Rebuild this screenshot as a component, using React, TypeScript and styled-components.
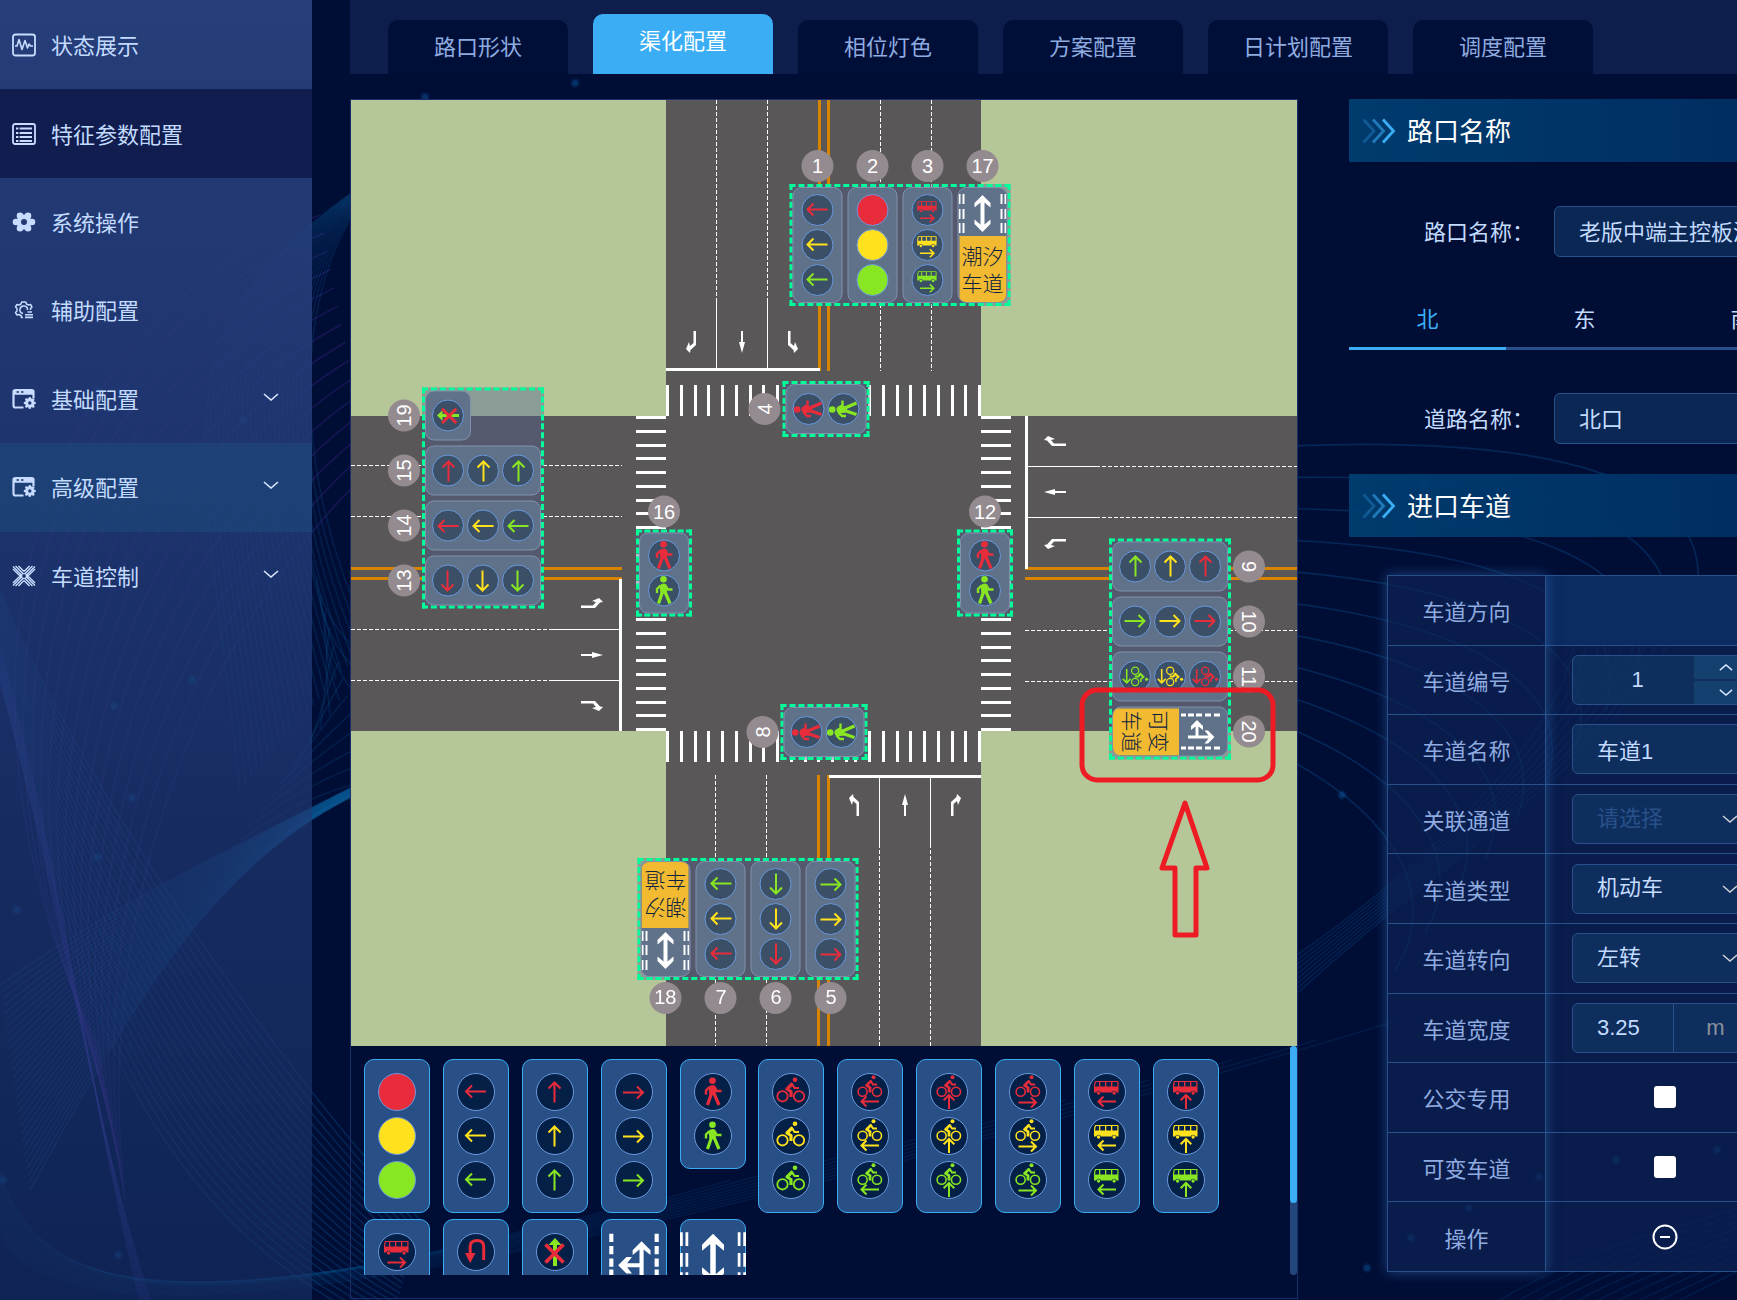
import React, { useState } from "react";
import styled, { createGlobalStyle, css } from "styled-components";

const fontStack = '"Liberation Sans", "Noto Sans CJK SC", sans-serif';

const colors = {
  page: "#000e36",
  bar: "#0e1e4c",
  line: "#28518a",
  accent: "#3aadf5",
  label: "#8fabe0",
  text: "#c3dbff",
  red: "#e92c3b",
  yellow: "#ffe21d",
  green: "#88e622",
};

const GlobalStyle = createGlobalStyle`
  *, *::before, *::after { box-sizing: border-box; }
  html, body { margin: 0; background: ${colors.page}; overflow-x: hidden; }
  body, button, input, select { font-family: ${fontStack}; font-size: 22px; }
  button { border: 0; padding: 0; margin: 0; background: none; color: inherit; cursor: pointer; }
  a { color: inherit; text-decoration: none; }
  ul { list-style: none; margin: 0; padding: 0; }
`;

/* ---------- backdrop ---------- */

type Curve = [number, number, number, number, number, number, number, number];

const ribbons: { from: Curve; to: Curve; count: number; color: string; opacity: number }[] = [
  { from: [0, 985, 120, 900, 230, 850, 370, 778], to: [30, 1190, 130, 1010, 210, 860, 370, 788], count: 30, color: "#0f6aa8", opacity: 0.26 },
  { from: [0, 590, 60, 740, 230, 1010, 420, 1220], to: [0, 680, 60, 900, 100, 1200, 390, 1330], count: 22, color: "#1566a8", opacity: 0.26 },
  { from: [0, 650, 60, 860, 90, 1100, 140, 1300], to: [0, 680, 60, 900, 100, 1150, 150, 1300], count: 5, color: "#4a3ab0", opacity: 0.3 },
  { from: [100, 1050, -70, 700, 20, 330, 320, 215], to: [125, 1200, 90, 900, 210, 620, 370, 470], count: 15, color: "#5a30a8", opacity: 0.26 },
  { from: [370, 190, 290, 290, 290, 470, 370, 640], to: [370, 180, 150, 330, 200, 420, 240, 790], count: 24, color: "#0f6aa8", opacity: 0.18 },
  { from: [312, 560, 320, 610, 340, 640, 370, 660], to: [370, 780, 330, 790, 300, 800, 240, 840], count: 14, color: "#0f6aa8", opacity: 0.18 },
  { from: [0, 1170, 30, 1290, 180, 1320, 480, 1240], to: [0, 1230, 40, 1330, 300, 1350, 1400, 1020], count: 12, color: "#0f6aa8", opacity: 0.14 },
  { from: [1290, 446, 1560, 435, 1720, 480, 1696, 600], to: [1290, 760, 1400, 820, 1440, 900, 1395, 970], count: 11, color: "#0f5ea0", opacity: 0.32 },
  { from: [1690, 590, 1650, 740, 1450, 850, 1290, 1000], to: [1575, 640, 1560, 740, 1420, 870, 1290, 960], count: 9, color: "#0f5ea0", opacity: 0.24 },
  { from: [1500, 1300, 1600, 1240, 1680, 1230, 1760, 1200], to: [1640, 1320, 1680, 1300, 1720, 1280, 1760, 1260], count: 10, color: "#0f5ea0", opacity: 0.16 },
];

const sparks: [number, number][] = [
  [575, 83], [425, 97], [97, 390], [243, 420], [192, 680], [114, 706], [132, 798], [97, 857], [17, 910],
  [3, 1180], [118, 1255], [1342, 795], [1425, 486], [1616, 1160], [1717, 1150], [1539, 1177], [1469, 1208], [1411, 1238], [1367, 1268],
];

const BackdropSvg = styled.svg`
  position: absolute;
  inset: 0;
  width: 100%;
  height: 100%;
  pointer-events: none;
`;

function Backdrop() {
  return (
    <BackdropSvg viewBox="0 0 1737 1300" preserveAspectRatio="xMinYMin slice" aria-hidden="true">
      {ribbons.map((r, i) => (
        <g key={i} fill="none" stroke={r.color} strokeOpacity={r.opacity} strokeWidth="1.6">
          {Array.from({ length: r.count }, (_, k) => {
            const t = k / (r.count - 1);
            const p = r.from.map((v, j) => Math.round((v + (r.to[j] - v) * t) * 10) / 10);
            return <path key={k} d={`M${p[0]} ${p[1]}C${p[2]} ${p[3]} ${p[4]} ${p[5]} ${p[6]} ${p[7]}`} />;
          })}
        </g>
      ))}
      {sparks.map(([x, y], i) => (
        <g key={i} fill="#1277c4">
          <circle cx={x} cy={y} r="5" opacity=".12" />
          <circle cx={x} cy={y} r="3" opacity=".25" />
        </g>
      ))}
    </BackdropSvg>
  );
}

/* ---------- page frame ---------- */

const Page = styled.div`
  position: relative;
  display: flex;
  min-height: 100vh;
  overflow: hidden;
  background: ${colors.page};
  color: ${colors.text};
`;

const Sidebar = styled.aside`
  position: relative;
  flex: 0 0 312px;
  background: linear-gradient(180deg, rgba(42, 67, 128, 0.9) 0%, rgba(38, 63, 126, 0.8) 30%, rgba(34, 60, 120, 0.68) 60%, rgba(25, 50, 104, 0.6) 100%);
`;

const MenuList = styled.ul`
  display: grid;
  grid-auto-rows: 1fr;
  height: 620px;
  padding-top: 1px;
`;

const MenuLink = styled.a<{ $tone?: "current" | "hover" }>`
  display: flex;
  align-items: center;
  height: 100%;
  padding: 0 33px 0 12px;
  gap: 15px;
  background: ${(p) => (p.$tone === "current" ? "#101d4e" : p.$tone === "hover" ? "rgba(32, 80, 128, 0.45)" : "transparent")};
  svg { flex: none; }
`;

const MenuText = styled.span`
  flex: 1;
  padding-bottom: 2px;
`;

const MenuArrow = styled.span`
  display: flex;
  padding-bottom: 4px;
`;

const Main = styled.main`
  position: relative;
  flex: 1;
  min-width: 0;
  margin-left: 38px;
`;

const TabBar = styled.nav`
  display: flex;
  align-items: flex-end;
  gap: 25px;
  height: 74px;
  padding-left: 38px;
  background: ${colors.bar};
`;

const Tab = styled.a<{ $active?: boolean }>`
  display: flex;
  align-items: center;
  justify-content: center;
  flex: 0 0 180px;
  height: 54px;
  padding-bottom: 4px;
  border-radius: 10px 10px 0 0;
  background: #000f38;
  color: ${colors.label};
  ${(p) =>
    p.$active &&
    css`
      height: 60px;
      padding-bottom: 10px;
      background: ${colors.accent};
      color: #fff;
    `}
`;

const Workspace = styled.div`
  display: flex;
  gap: 51px;
  padding: 25px 0 1px;
`;

/* ---------- menu icons ---------- */

const iconInk = "#c8dcff";

const ringPoints = (n: number, r: number, cx: number, cy: number, squash = 1) =>
  Array.from({ length: n }, (_, i) => {
    const a = (Math.PI * 2 * i) / n;
    return [(cx + Math.cos(a) * r).toFixed(1), (cy + Math.sin(a) * r * squash).toFixed(1)];
  });

type MenuIconKind = "status" | "params" | "system" | "aux" | "window" | "lanes";

function MenuIcon({ kind }: { kind: MenuIconKind }) {
  return (
    <svg width="24" height="24" viewBox="0 0 24 24" fill="none" stroke={iconInk} strokeWidth="1.8" aria-hidden="true">
      {kind === "status" && (
        <>
          <rect x="1" y="1.5" width="22" height="21" rx="2.5" />
          <path d="M3 13H5L7 6.500L10 16.500L13 7.500L15.500 15L17 11L18.500 13H21" strokeWidth="1.6" strokeLinejoin="round" />
        </>
      )}
      {kind === "params" && (
        <>
          <rect x="1" y="2" width="22" height="20" rx="2" />
          <path d="M4 6.500H20M4 11H20M4 15H20M4 19H20" strokeWidth="2" />
          <path d="M7 5V21" stroke="#101d4e" strokeWidth="1.2" />
        </>
      )}
      {kind === "system" && (
        <>
          <mask id="gearHole">
            <rect width="24" height="24" fill="#fff" stroke="none" />
            <circle cx="12" cy="12" r="3" fill="#000" stroke="none" />
          </mask>
          <g mask="url(#gearHole)" fill={iconInk} stroke="none">
            <circle cx="12" cy="12" r="7.500" />
            {ringPoints(6, 8, 12, 12, 0.9).map(([x, y]) => (
              <circle key={x + y} cx={x} cy={y} r="3.300" />
            ))}
          </g>
        </>
      )}
      {kind === "aux" && (
        <>
          <path
            strokeWidth="1.5"
            strokeLinejoin="round"
            d="M11 19.500H9.500L9 17.500L7 16.500L5 17L3.500 14.500L5 13V10.500L3.500 9L5 6.500L7 7L9 6L9.700 4H13.800L14.500 6L16.500 7L18.500 6.500L20 9L18.500 10.500V12"
          />
          <path strokeWidth="1.5" d="M11 15.500A3.800 3.800 0 1 1 15.500 12" />
          <path strokeWidth="1.6" d="M15.500 14H20M13 16.700H21M13 19.400H21" />
        </>
      )}
      {kind === "window" && (
        <>
          <path d="M11.500 20.500H3.500Q1.500 20.500 1.500 18.500V4.500Q1.500 3 3.500 3H19.500Q21.500 3 21.500 4.500V11" strokeWidth="2.2" />
          <path d="M1.500 5.500H21.500" strokeWidth="4.500" />
          <path d="M4.500 5H7M9 5H11.500" stroke="#24396f" strokeWidth="1.400" />
          {ringPoints(8, 4.8, 17.8, 16).map(([x, y]) => (
            <circle key={x + y} cx={x} cy={y} r="1.300" fill={iconInk} stroke="none" />
          ))}
          <circle cx="17.800" cy="16" r="3.200" strokeWidth="3" />
        </>
      )}
      {kind === "lanes" && (
        <>
          <path
            strokeWidth="1.400"
            d="M1 5L7 11M1 2.500L9.500 11M3.500 2L11 9.500M6.500 2L12 7.500M23 5L17 11M23 2.500L14.500 11M20.500 2L13 9.500M17.500 2L12 7.500M1 19L7 13M1 21.500L9.500 13M3.500 22L11 14.500M6.500 22L12 16.500M23 19L17 13M23 21.500L14.500 13M20.500 22L13 14.500M17.500 22L12 16.500M7 11L9 12L7 13M17 11L15 12L17 13"
          />
          <circle cx="12" cy="12" r="2.500" strokeWidth="1.200" />
        </>
      )}
    </svg>
  );
}

const Chevron = ({ up = false, size = 16, color = "#dbe7ff" }: { up?: boolean; size?: number; color?: string }) => (
  <svg width={size} height={size / 2} viewBox="0 0 16 8" fill="none" stroke={color} strokeWidth="1.6" aria-hidden="true">
    <path d={up ? "M1 7L8 1L15 7" : "M1 1L8 7L15 1"} />
  </svg>
);

const menu: { text: string; icon: MenuIconKind; tone?: "current" | "hover"; group?: boolean }[] = [
  { text: "状态展示", icon: "status" },
  { text: "特征参数配置", icon: "params", tone: "current" },
  { text: "系统操作", icon: "system" },
  { text: "辅助配置", icon: "aux" },
  { text: "基础配置", icon: "window", group: true },
  { text: "高级配置", icon: "window", group: true, tone: "hover" },
  { text: "车道控制", icon: "lanes", group: true },
];

/* ---------- signal lamps ---------- */

type LampKind =
  | "ball" | "left" | "up" | "right" | "walk" | "bike" | "bikeLeft" | "bikeUp" | "bikeRight"
  | "busLeft" | "busUp" | "busRight" | "uturn" | "closed";
type LampColor = "red" | "yellow" | "green";

const Lamp = styled.span<{ $size: number; $fill: string }>`
  display: flex;
  align-items: center;
  justify-content: center;
  flex: none;
  width: ${(p) => p.$size}px;
  height: ${(p) => p.$size}px;
  border: 1px solid #6b98dc;
  border-radius: 50%;
  background: ${(p) => p.$fill};
  svg { flex: none; }
`;

const Bike = () => (
  <>
    <circle cx="10.500" cy="23.300" r="5.200" fill="none" strokeWidth="1.800" />
    <circle cx="27" cy="23.300" r="5.200" fill="none" strokeWidth="1.800" />
    <circle cx="23" cy="6.700" r="2.300" stroke="none" />
    <path d="M20.500 10.500L15 16L19 18.500V24" fill="none" strokeWidth="3.200" strokeLinejoin="round" />
    <path d="M19.500 10.500L22.500 15H27" fill="none" strokeWidth="2.200" />
  </>
);

const Bus = () => (
  <path
    stroke="none"
    fillRule="evenodd"
    d="M7.500 8H29.500Q30.500 8 30.500 9V19.500H28.500A2.500 2.500 0 0 0 23.700 19.500H13A2.500 2.500 0 0 0 8.200 19.500H6V12L6.600 9Q6.800 8 7.500 8ZM7.800 9L7 13.500H11V9ZM12.300 9V13.500H17V9ZM18.300 9V13.500H23V9ZM24.300 9V13.500H29.300V9ZM10.600 18.300A1.700 1.700 0 1 0 10.610 18.300ZM26.100 18.300A1.700 1.700 0 1 0 26.110 18.300Z"
  />
);

const sideArrow = {
  Left: "M28 28.500H10.500M15.500 23.500L10.500 28.500L15.500 33.500",
  Right: "M9.500 29.500H27M22 24.500L27 29.500L22 34.500",
  Up: "M19 36V22M13.700 27.300L19 22L24.300 27.300",
};

function LampArt({ kind, color, onMap }: { kind: LampKind; color: string; onMap: boolean }) {
  const combined = kind.length > 5;
  const size = onMap && combined ? 30 : 38;
  const dir = kind.endsWith("Left") ? "Left" : kind.endsWith("Right") ? "Right" : "Up";
  return (
    <svg width={size} height={size} viewBox="0 0 38 38" fill={color} stroke={color} strokeWidth="2" aria-hidden="true">
      {kind === "left" && <path fill="none" d="M29 18.500H9M15 12.500L9 18.500L15 24.500" />}
      {kind === "right" && <path fill="none" d="M8 19.500H28M22 13.500L28 19.500L22 25.500" />}
      {kind === "up" && <path fill="none" d="M18.500 29.500V9.500M12.500 15.500L18.500 9.500L24.500 15.500" />}
      {kind === "walk" && (
        <>
          <circle cx="18.500" cy="7.700" r="3.300" stroke="none" />
          <path d="M14.500 14Q18 10.500 21.500 13L22 22H15.500Z" stroke="none" />
          <path d="M15.500 14L12 17.500V21.500M21 14.500L22.500 18H27.500" fill="none" strokeWidth="2.400" />
          <path d="M17.300 21L13.500 32M20.300 21L25 32" fill="none" strokeWidth="3.200" />
        </>
      )}
      {kind === "bike" && <Bike />}
      {kind.startsWith("bike") && kind !== "bike" && (
        <>
          <g transform="translate(2.500 -1.500) scale(.87)"><Bike /></g>
          <path fill="none" d={sideArrow[dir]} />
        </>
      )}
      {kind.startsWith("bus") && (
        <>
          <Bus />
          <path fill="none" d={sideArrow[dir]} />
        </>
      )}
      {kind === "uturn" && (
        <>
          <path d="M26.700 27V13.500Q26.700 7.500 20.200 7.500Q13.200 7.500 13.200 13.500V21" fill="none" strokeWidth="3" />
          <path d="M8 20H18.500L13.200 30Z" stroke="none" />
        </>
      )}
      {kind === "closed" && (
        <>
          <path d="M19 5L25.500 12H21V33H17V12H12.500Z" fill={colors.green} stroke="none" />
          <path d="M9.500 11.500L27.500 29.500M27.500 11.500L9.500 29.500" fill="none" strokeWidth="3.800" />
        </>
      )}
    </svg>
  );
}

function LampStack({ kind, size, onMap = false }: { kind: LampKind; size: number; onMap?: boolean }) {
  const list: LampColor[] = kind === "walk" ? ["red", "green"] : kind === "closed" ? ["red"] : ["red", "yellow", "green"];
  return (
    <>
      {list.map((c) => (
        <Lamp key={c} $size={size} $fill={kind === "ball" ? colors[c] : onMap ? "#3b4f66" : "#052046"}>
          {kind !== "ball" && <LampArt kind={kind} color={colors[c]} onMap={onMap} />}
        </Lamp>
      ))}
    </>
  );
}

/* lane signs: 48 units square */
function SignArt({ kind, size }: { kind: "tidal" | "variable"; size: number }) {
  return (
    <svg width={size} height={size} viewBox="0 0 48 48" fill="#fff" aria-hidden="true">
      {kind === "tidal" ? (
        <>
          <path d="M0 6h2v10h-2zM4 6h2v10h-2zM42 6h2v10h-2zM46 6h2v10h-2zM0 21h2v10h-2zM4 21h2v10h-2zM42 21h2v10h-2zM46 21h2v10h-2zM0 35h2v10h-2zM4 35h2v10h-2zM42 35h2v10h-2zM46 35h2v10h-2z" />
          <path d="M24 7L32 15V19.500L26 14.500V36.500L32 31.500V36L24 44L16 36V31.500L22 36.500V14.500L16 19.500V15Z" />
        </>
      ) : (
        <>
          <path d="M6 7h3v6h-3zM39 7h3v6h-3zM6 16h3v6h-3zM39 16h3v6h-3zM6 25h3v6h-3zM39 25h3v6h-3zM6 33h3v6h-3zM39 33h3v6h-3zM6 41h3v5h-3zM39 41h3v5h-3z" />
          <path d="M29.500 12.500L36 19V22.500L31 18.500V39H28V31.500H19L22.500 36H18.500L12.500 30L18.500 24H22.500L19 28.500H28V18.500L23 22.500V19Z" />
        </>
      )}
    </svg>
  );
}

/* ---------- crossing map ---------- */

const MapPanel = styled.section`
  flex: 0 0 948px;
  border: 1px solid #1a2f68;
`;

const MapCanvas = styled.div`
  position: relative;
  height: 946px;
  > svg { display: block; width: 100%; height: 100%; }
`;

const Group = styled.div<{ $x: number; $y: number; $angle: number }>`
  position: absolute;
  left: ${(p) => p.$x}px;
  top: ${(p) => p.$y}px;
  display: flex;
  align-items: flex-start;
  gap: 5px;
  border: 3px dashed #00ff99;
  background: rgba(76, 92, 146, 0.4);
  transform: translate(-50%, -50%) rotate(${(p) => p.$angle}deg);
`;

const SignalCell = styled.div`
  position: relative;
  flex: 0 0 50px;
`;

const SignalCard = styled.div<{ $sign?: boolean }>`
  display: flex;
  flex-direction: column;
  align-items: center;
  gap: 3px;
  padding: 6px 0;
  border: 1px solid #8292ac;
  border-radius: 9px;
  background: #5f7289;
  overflow: hidden;
  ${(p) =>
    p.$sign &&
    css`
      gap: 0;
      height: 116px;
      padding: 0;
    `}
`;

const SignText = styled.div`
  flex: 1;
  width: 47px;
  padding-top: 7px;
  background: #f2ba30;
  color: #0a2240;
  font-size: 21px;
  font-weight: 300;
  line-height: 27px;
  text-align: center;
`;

const Badge = styled.span`
  position: absolute;
  left: 9px;
  top: -37px;
  display: flex;
  align-items: center;
  justify-content: center;
  width: 32px;
  height: 32px;
  border-radius: 50%;
  background: #948b90;
  color: #fff;
  font-size: 20px;
`;

const BadgeText = styled.span<{ $flip: boolean }>`
  transform: ${(p) => (p.$flip ? "rotate(180deg)" : "none")};
`;

type Signal = { no: number; kind: LampKind | "tidal" | "variable" };

const groups: { x: number; y: number; angle: number; signals: Signal[] }[] = [
  { x: 549, y: 145, angle: 0, signals: [{ no: 1, kind: "left" }, { no: 2, kind: "ball" }, { no: 3, kind: "busRight" }, { no: 17, kind: "tidal" }] },
  { x: 819, y: 549, angle: 90, signals: [{ no: 9, kind: "left" }, { no: 10, kind: "up" }, { no: 11, kind: "bikeRight" }, { no: 20, kind: "variable" }] },
  { x: 397, y: 819, angle: 180, signals: [{ no: 5, kind: "left" }, { no: 6, kind: "up" }, { no: 7, kind: "right" }, { no: 18, kind: "tidal" }] },
  { x: 132, y: 398, angle: -90, signals: [{ no: 13, kind: "left" }, { no: 14, kind: "up" }, { no: 15, kind: "right" }, { no: 19, kind: "closed" }] },
  { x: 475, y: 309, angle: -90, signals: [{ no: 4, kind: "walk" }] },
  { x: 473, y: 632, angle: -90, signals: [{ no: 8, kind: "walk" }] },
  { x: 634, y: 473, angle: 0, signals: [{ no: 12, kind: "walk" }] },
  { x: 313, y: 473, angle: 0, signals: [{ no: 16, kind: "walk" }] },
];

function SignalItem({ signal, flip }: { signal: Signal; flip: boolean }) {
  const { no, kind } = signal;
  return (
    <SignalCell>
      <Badge>
        <BadgeText $flip={flip}>{no}</BadgeText>
      </Badge>
      {kind === "tidal" || kind === "variable" ? (
        <SignalCard $sign>
          <SignArt kind={kind} size={48} />
          <SignText>
            {kind === "tidal" ? "潮汐" : "可变"}
            <br />
            车道
          </SignText>
        </SignalCard>
      ) : (
        <SignalCard>
          <LampStack kind={kind} size={32} onMap />
        </SignalCard>
      )}
    </SignalCell>
  );
}

const stripeOffsets = [
  ...Array.from({ length: 14 }, (_, i) => Math.round(i * 13.75)),
  ...Array.from({ length: 10 }, (_, i) => Math.round(312 - (9 - i) * 13.75)),
];
const verticalStripes = (y: number) => stripeOffsets.map((o) => `M${315 + o} ${y}h3v31h-3z`).join("");
const horizontalStripes = (x: number) => stripeOffsets.map((o) => `M${x} ${316 + o}h30v3h-30z`).join("");

const arrowShapes = {
  straight: "M-1 11V0H-3L0 -11L3 0H1V11Z",
  left: "M4 11H1.500V-1L-2 -4L-3 0L-6 -7L-2 -11L-1.500 -8L4 -3Z",
  right: "M-4 11H-1.500V-1L2 -4L3 0L6 -7L2 -11L1.500 -8L-4 -3Z",
};

const laneArrows: { x: number; y: number; angle: number; turn: keyof typeof arrowShapes }[] = [
  { x: 341, y: 242, angle: 180, turn: "right" },
  { x: 391, y: 242, angle: 180, turn: "straight" },
  { x: 441, y: 242, angle: 180, turn: "left" },
  { x: 504, y: 705, angle: 0, turn: "left" },
  { x: 554, y: 705, angle: 0, turn: "straight" },
  { x: 604, y: 705, angle: 0, turn: "right" },
  { x: 241, y: 504, angle: 90, turn: "left" },
  { x: 241, y: 555, angle: 90, turn: "straight" },
  { x: 241, y: 605, angle: 90, turn: "right" },
  { x: 704, y: 342, angle: -90, turn: "right" },
  { x: 704, y: 392, angle: -90, turn: "straight" },
  { x: 704, y: 443, angle: -90, turn: "left" },
];

function Roads() {
  return (
    <svg viewBox="0 0 946 946" role="img" aria-label="路口渠化图">
      <rect width="946" height="946" fill="#b5c698" />
      <path d="M315 0H630V946H315ZM0 316H946V631H0Z" fill="#5a5758" />
      <g fill="#d98400">
        <path d="M467 0h3v271h-3zM476 0h3v271h-3zM466 675h3v271h-3zM476 675h3v271h-3z" />
        <path d="M0 467h271v3h-271zM0 477h271v3h-271zM674 467h272v3h-272zM674 477h272v3h-272z" />
      </g>
      <g stroke="#fff" fill="none">
        <path
          strokeDasharray="4 2"
          d="M365.500 0V200M416.500 0V200M529.500 0V271M580.500 0V271M364.500 675V946M415.500 675V946M528.500 946V746M579.500 946V746M0 365.500H271M0 416.500H271M0 529.500H200M0 580.500H200M745 366.500H946M745 417.500H946M674 530.500H946M674 581.500H946"
        />
        <path d="M365.500 200V268M416.500 200V268M528.500 678V746M579.500 678V746M200 529.500H268M200 580.500H268M677 366.500H745M677 417.500H745" />
        <path strokeWidth="3" d="M315 269.500H469M478 676.500H630M269.500 479V631M675.500 316V469" />
      </g>
      <path fill="#fff" d={verticalStripes(285) + verticalStripes(631) + horizontalStripes(285) + horizontalStripes(630)} />
      {laneArrows.map((a, i) => (
        <path key={i} d={arrowShapes[a.turn]} fill="#fff" transform={`translate(${a.x} ${a.y}) rotate(${a.angle})`} />
      ))}
    </svg>
  );
}

const Markup = styled.svg`
  position: absolute;
  inset: 0;
  pointer-events: none;
`;

/* ---------- lamp palette ---------- */

const PaletteRow = styled.div`
  display: flex;
  height: 229px;
  margin-bottom: 23px;
`;

const PaletteGrid = styled.div`
  flex: 1;
  display: grid;
  grid-template-columns: repeat(11, 66px);
  justify-content: space-between;
  align-content: start;
  align-items: start;
  row-gap: 6px;
  padding: 13px 71px 0 13px;
  overflow: hidden;
`;

const PaletteCard = styled.button<{ $sign?: boolean }>`
  display: flex;
  flex-direction: column;
  align-items: center;
  gap: 6px;
  padding: ${(p) => (p.$sign ? "4px 0 0" : "13px 0")};
  height: ${(p) => (p.$sign ? "154px" : "auto")};
  border: 1px solid ${colors.accent};
  border-radius: 10px;
  background: #285086;
`;

const ScrollTrack = styled.div`
  flex: 0 0 7px;
  border-radius: 4px;
  background: #23477c;
`;

const ScrollThumb = styled.div`
  height: 157px;
  border-radius: 4px;
  background: ${colors.accent};
`;

const palette: { kind: LampKind | "tidal" | "variable"; name: string }[] = [
  { kind: "ball", name: "机动车圆灯" },
  { kind: "left", name: "左转箭头灯" },
  { kind: "up", name: "直行箭头灯" },
  { kind: "right", name: "右转箭头灯" },
  { kind: "walk", name: "行人灯" },
  { kind: "bike", name: "非机动车灯" },
  { kind: "bikeLeft", name: "非机动车左转灯" },
  { kind: "bikeUp", name: "非机动车直行灯" },
  { kind: "bikeRight", name: "非机动车右转灯" },
  { kind: "busLeft", name: "公交左转灯" },
  { kind: "busUp", name: "公交直行灯" },
  { kind: "busRight", name: "公交右转灯" },
  { kind: "uturn", name: "掉头灯" },
  { kind: "closed", name: "车道灯" },
  { kind: "variable", name: "可变车道" },
  { kind: "tidal", name: "潮汐车道" },
];

/* ---------- settings ---------- */

const Settings = styled.section`
  flex: 1 0 500px;
`;

const SectionTitle = styled.h2`
  display: flex;
  align-items: center;
  gap: 11px;
  height: 63px;
  margin: 0;
  padding-left: 13px;
  background: linear-gradient(90deg, rgba(0, 64, 116, 0.9), rgba(0, 46, 100, 0.95) 80%);
  color: #fff;
  font-size: 26px;
  font-weight: 400;
  span { padding-bottom: 3px; }
`;

const FormRow = styled.div`
  display: flex;
  align-items: center;
  height: 51px;
  padding-left: 75px;
  label { flex: 0 0 130px; padding-bottom: 4px; }
`;

const field = css`
  min-width: 0;
  border: 1px solid ${colors.line};
  border-radius: 6px;
  background: rgba(18, 58, 106, 0.6);
  color: ${colors.text};
  outline: none;
`;

const TextField = styled.input`
  ${field}
  flex: 1;
  height: 51px;
  padding: 0 24px 3px;
`;

const DirectionTabs = styled.div`
  display: flex;
  height: 61px;
  border-bottom: 3px solid ${colors.line};
`;

const DirectionTab = styled.button<{ $active: boolean }>`
  flex: 0 0 157px;
  height: 61px;
  padding-bottom: 2px;
  border-bottom: 3px solid ${(p) => (p.$active ? colors.accent : "transparent")};
  color: ${(p) => (p.$active ? colors.accent : colors.text)};
`;

const LaneTable = styled.table`
  width: 397px;
  height: 697px;
  margin: 38px 0 0 38px;
  border-collapse: collapse;
  table-layout: fixed;
  tr { height: 10%; }
  th, td { border: 1px solid ${colors.line}; padding: 0; }
`;

const TableFrame = styled.div`
  position: relative;
`;

const ColumnGlow = styled.div`
  position: absolute;
  left: 38px;
  top: 0;
  bottom: 0;
  width: 159px;
  box-shadow: 0 0 12px rgba(58, 124, 200, 0.5);
  pointer-events: none;
`;

const HeadCell = styled.th`
  width: 158px;
  background: rgba(14, 36, 86, 0.66);
  color: ${colors.label};
  font-weight: 400;
  text-align: center;
`;

const ValueCell = styled.td<{ $head?: boolean }>`
  width: 239px;
  background: ${(p) => (p.$head ? "#0b2b61" : "rgba(14, 36, 86, 0.66)")};
  text-align: center;
`;

const CellField = styled.div`
  ${field}
  display: flex;
  align-items: stretch;
  width: 186px;
  height: 50px;
  margin: 0 auto;
  overflow: hidden;
  text-align: left;
`;

const CellInput = styled.input<{ $center?: boolean }>`
  flex: 1;
  width: 0;
  min-width: 0;
  border: 0;
  outline: none;
  padding: ${(p) => (p.$center ? "0 0 0 8px" : "0 24px")};
  background: none;
  color: ${colors.text};
  text-align: ${(p) => (p.$center ? "center" : "left")};
`;

const Steps = styled.div`
  display: flex;
  flex-direction: column;
  flex: 0 0 63px;
  gap: 2px;
`;

const StepButton = styled.button`
  display: flex;
  align-items: center;
  justify-content: center;
  flex: 1;
  background: #14406f;
`;

const Unit = styled.span`
  display: flex;
  align-items: center;
  justify-content: center;
  flex: 0 0 84px;
  border-left: 1px solid ${colors.line};
  color: #8a8f9c;
`;

const SelectWrap = styled(CellField)`
  align-items: center;
  padding-right: 19px;
`;

const Select = styled.select<{ $empty?: boolean }>`
  appearance: none;
  flex: 1;
  min-width: 0;
  height: 100%;
  border: 0;
  outline: none;
  padding: 0 0 2px 24px;
  background: none;
  color: ${(p) => (p.$empty ? colors.line : colors.text)};
`;

const Tick = styled.input`
  appearance: none;
  display: block;
  width: 22px;
  height: 22px;
  margin: 0 auto;
  border-radius: 3px;
  background: #fff;
  &:checked { background: ${colors.accent}; }
`;

const RoundButton = styled.button`
  display: block;
  margin: 0 auto;
  svg { display: block; }
`;

const Spacer = styled.div<{ $h: number }>`
  height: ${(p) => p.$h}px;
`;

const TitleMark = () => (
  <svg width="34" height="26" viewBox="0 0 34 26" fill="none" stroke={colors.accent} strokeWidth="2.800" aria-hidden="true">
    <path d="M1.500 1.500L12 13L1.500 24.500" opacity=".28" />
    <path d="M11 1.500L21.500 13L11 24.500" opacity=".55" />
    <path d="M21 1.500L31.500 13L21 24.500" />
  </svg>
);

export default function App() {
  const [direction, setDirection] = useState("北");
  const [laneNo, setLaneNo] = useState(1);

  return (
    <>
      <GlobalStyle />
      <Page>
        <Backdrop />
        <Sidebar>
          <nav>
            <MenuList>
              {menu.map((m) => (
                <li key={m.text}>
                  <MenuLink href="#" $tone={m.tone}>
                    <MenuIcon kind={m.icon} />
                    <MenuText>{m.text}</MenuText>
                    {m.group && (
                      <MenuArrow>
                        <Chevron />
                      </MenuArrow>
                    )}
                  </MenuLink>
                </li>
              ))}
            </MenuList>
          </nav>
        </Sidebar>

        <Main>
          <TabBar>
            {["路口形状", "渠化配置", "相位灯色", "方案配置", "日计划配置", "调度配置"].map((t) => (
              <Tab key={t} href="#" $active={t === "渠化配置"}>
                {t}
              </Tab>
            ))}
          </TabBar>

          <Workspace>
            <MapPanel>
              <MapCanvas>
                <Roads />
                {groups.map((g) => (
                  <Group key={g.signals[0].no} $x={g.x} $y={g.y} $angle={g.angle}>
                    {g.signals.map((s) => (
                      <SignalItem key={s.no} signal={s} flip={g.angle === 180} />
                    ))}
                  </Group>
                ))}
                <Markup viewBox="0 0 946 946" fill="none" stroke="#ed1c24" strokeWidth="5" aria-hidden="true">
                  <rect x="731" y="590" width="191" height="90" rx="15" />
                  <path d="M834 703L856 768H845V835H824V768H811Z" strokeLinejoin="round" />
                </Markup>
              </MapCanvas>
              <PaletteRow>
                <PaletteGrid>
                  {palette.map((p) =>
                    p.kind === "tidal" || p.kind === "variable" ? (
                      <PaletteCard key={p.kind} $sign aria-label={p.name}>
                        <SignArt kind={p.kind} size={66} />
                      </PaletteCard>
                    ) : (
                      <PaletteCard key={p.kind} aria-label={p.name}>
                        <LampStack kind={p.kind} size={38} />
                      </PaletteCard>
                    )
                  )}
                </PaletteGrid>
                <ScrollTrack>
                  <ScrollThumb />
                </ScrollTrack>
              </PaletteRow>
            </MapPanel>

            <Settings>
              <SectionTitle>
                <TitleMark />
                <span>路口名称</span>
              </SectionTitle>
              <Spacer $h={44} />
              <FormRow>
                <label htmlFor="crossing">路口名称：</label>
                <TextField id="crossing" defaultValue="老版中端主控板测试" />
              </FormRow>
              <Spacer $h={32} />
              <DirectionTabs>
                {["北", "东", "南"].map((d) => (
                  <DirectionTab key={d} $active={d === direction} onClick={() => setDirection(d)}>
                    {d}
                  </DirectionTab>
                ))}
              </DirectionTabs>
              <Spacer $h={43} />
              <FormRow>
                <label htmlFor="road">道路名称：</label>
                <TextField id="road" defaultValue="北口" />
              </FormRow>
              <Spacer $h={30} />
              <SectionTitle>
                <TitleMark />
                <span>进口车道</span>
              </SectionTitle>
              <TableFrame>
                <ColumnGlow />
                <LaneTable>
                  <tbody>
                    <tr>
                      <HeadCell scope="row">车道方向</HeadCell>
                      <ValueCell $head />
                    </tr>
                    <tr>
                      <HeadCell scope="row"><label htmlFor="laneNo">车道编号</label></HeadCell>
                      <ValueCell>
                        <CellField>
                          <CellInput
                            id="laneNo"
                            $center
                            inputMode="numeric"
                            value={laneNo}
                            onChange={(e) => setLaneNo(Number(e.target.value) || 0)}
                          />
                          <Steps>
                            <StepButton aria-label="增加" onClick={() => setLaneNo(laneNo + 1)}><Chevron up size={14} /></StepButton>
                            <StepButton aria-label="减少" onClick={() => setLaneNo(laneNo - 1)}><Chevron size={14} /></StepButton>
                          </Steps>
                        </CellField>
                      </ValueCell>
                    </tr>
                    <tr>
                      <HeadCell scope="row"><label htmlFor="laneName">车道名称</label></HeadCell>
                      <ValueCell>
                        <CellField><CellInput id="laneName" defaultValue="车道1" /></CellField>
                      </ValueCell>
                    </tr>
                    <tr>
                      <HeadCell scope="row"><label htmlFor="channel">关联通道</label></HeadCell>
                      <ValueCell>
                        <SelectWrap>
                          <Select id="channel" $empty><option>请选择</option></Select>
                          <Chevron color="#c9ccd4" />
                        </SelectWrap>
                      </ValueCell>
                    </tr>
                    <tr>
                      <HeadCell scope="row"><label htmlFor="laneType">车道类型</label></HeadCell>
                      <ValueCell>
                        <SelectWrap>
                          <Select id="laneType"><option>机动车</option></Select>
                          <Chevron color="#c9ccd4" />
                        </SelectWrap>
                      </ValueCell>
                    </tr>
                    <tr>
                      <HeadCell scope="row"><label htmlFor="turn">车道转向</label></HeadCell>
                      <ValueCell>
                        <SelectWrap>
                          <Select id="turn"><option>左转</option></Select>
                          <Chevron color="#c9ccd4" />
                        </SelectWrap>
                      </ValueCell>
                    </tr>
                    <tr>
                      <HeadCell scope="row"><label htmlFor="laneWidth">车道宽度</label></HeadCell>
                      <ValueCell>
                        <CellField>
                          <CellInput id="laneWidth" defaultValue="3.25" />
                          <Unit>m</Unit>
                        </CellField>
                      </ValueCell>
                    </tr>
                    <tr>
                      <HeadCell scope="row"><label htmlFor="busOnly">公交专用</label></HeadCell>
                      <ValueCell><Tick id="busOnly" type="checkbox" /></ValueCell>
                    </tr>
                    <tr>
                      <HeadCell scope="row"><label htmlFor="variable">可变车道</label></HeadCell>
                      <ValueCell><Tick id="variable" type="checkbox" /></ValueCell>
                    </tr>
                    <tr>
                      <HeadCell scope="row">操作</HeadCell>
                      <ValueCell>
                        <RoundButton aria-label="删除车道">
                          <svg width="26" height="26" viewBox="0 0 26 26" fill="none" stroke="#fff" strokeWidth="2">
                            <circle cx="13" cy="13" r="11.500" />
                            <path d="M8 13H18" />
                          </svg>
                        </RoundButton>
                      </ValueCell>
                    </tr>
                  </tbody>
                </LaneTable>
              </TableFrame>
            </Settings>
          </Workspace>
        </Main>
      </Page>
    </>
  );
}
